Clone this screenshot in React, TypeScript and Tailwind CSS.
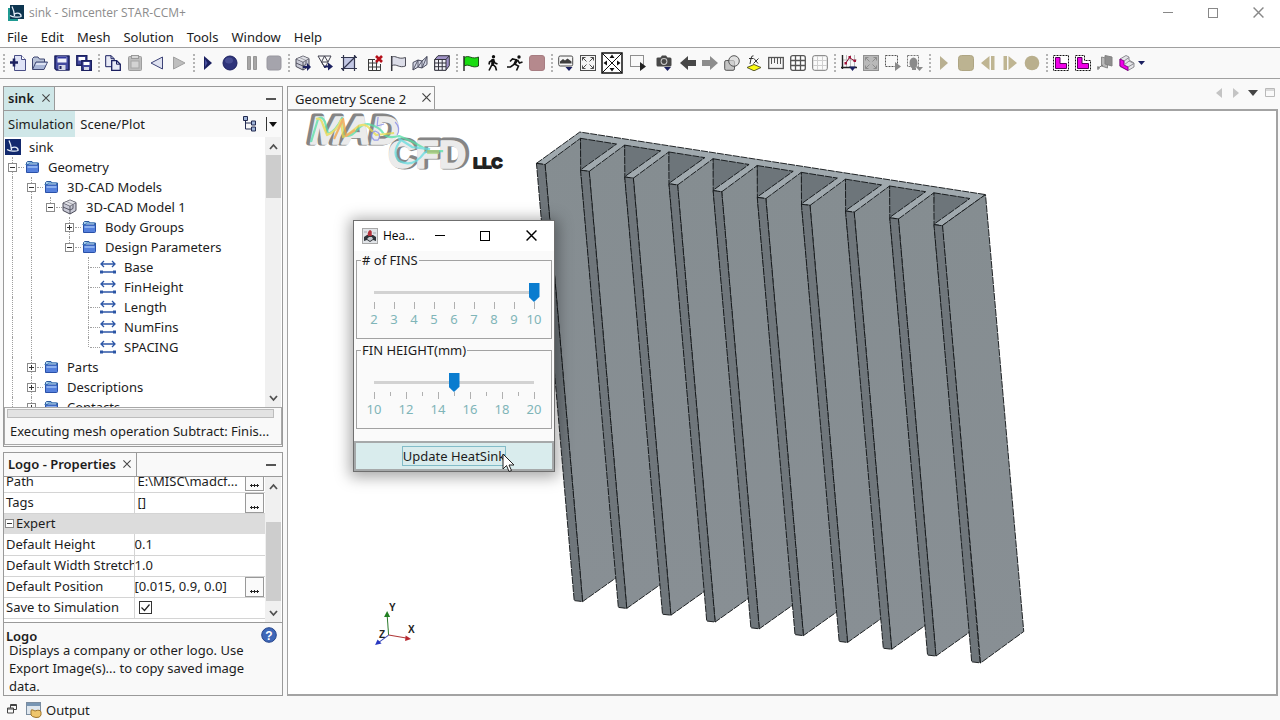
import React, { useState } from "react";

const navy = "#1b2060";

function Svg({ children, w = 16, h = 16 }: { children: React.ReactNode; w?: number; h?: number }) {
  return (
    <svg width={w} height={h} viewBox={`0 0 ${w} ${h}`} fill="none" aria-hidden="true" className="block shrink-0">
      {children}
    </svg>
  );
}

const Cube = ({ arrow = false }: { arrow?: boolean }) => (
  <Svg>
    <path d="M1 4 8 1l6 2.500v8L8 15l-7-3.500z" fill="#c9cad6" stroke="#4a4a58" />
    <path d="M1 4l7 3 6-3.500M8 7v8M4.500 2.500l6.500 3v4l-3 1.500M1 8l7 3" stroke="#4a4a58" strokeWidth=".9" />
    <path d="M1 4 8 1l6 2.500L8 7z" fill="#fff" fillOpacity=".45" />
    {arrow && <path d="M8 11h4V8l4 4-4 4v-3H8z" fill={navy} />}
  </Svg>
);

const Frame = ({ off = false }: { off?: boolean }) => (
  <Svg>
    <rect x=".5" y=".5" width="15" height="15" fill={off ? "#b9b9b9" : "#f4f4f4"} stroke={off ? "#909090" : "#4d4d4d"} />
    <path
      d="M6.500 6.500l-4-4m0 3v-3h3M9.500 6.500l4-4m-3 0h3v3M6.500 9.500l-4 4m0-3v3h3M9.500 9.500l4 4m-3 0h3v-3"
      stroke={off ? "#8c8c8c" : "#4d4d4d"}
    />
  </Svg>
);

const icons: Record<string, React.ReactNode> = {
  "New simulation": (
    <Svg>
      <path d="M4.500.5h7l4 4v11h-11z" fill="#dfe3f6" stroke="#4a4f86" />
      <path d="M11.500.5v4h4" fill="#fff" stroke="#4a4f86" />
      <path d="M0 7.500h8M4 3.500v8" stroke={navy} strokeWidth="2.600" />
    </Svg>
  ),
  Open: (
    <Svg>
      <path d="M.5 14V3.500L2 2h4l1.500 2h5v3" fill="#b9c3d8" stroke="#3f4670" />
      <path d="M.5 14.500 4 7h11.500L12 14.500z" fill="#a9b6d6" stroke="#3f4670" />
      <path d="M4.500 8h10l-1 2h-10z" fill="#dce2f2" />
    </Svg>
  ),
  Save: (
    <Svg>
      <path d="M1 1h14v14H2.500L1 13.500z" fill="#444aa0" stroke={navy} strokeWidth="1.600" strokeLinejoin="round" />
      <path d="M3.500 1.500h9v6h-9z" fill="#f1f2fb" />
      <path d="M3.500 1.500h9v2h-9z" fill="#3338a0" />
      <path d="M4.500 10h7v5h-7z" fill="#d5d7e8" />
      <path d="M5.500 11h2v3h-2z" fill={navy} />
    </Svg>
  ),
  "Save all": (
    <Svg>
      <path d="M.8.8h10v9.500H.8z" fill="#444aa0" stroke={navy} strokeWidth="1.400" />
      <path d="M2.500 2h6.500v3.500H2.500z" fill="#fff" />
      <path d="M5.800 5.800h9.500v9.500H5.800z" fill="#3e449a" stroke={navy} strokeWidth="1.400" />
      <path d="M7.500 7h6v3h-6z" fill="#fff" />
      <path d="M8 12h5v3H8z" fill="#d5d7e8" />
    </Svg>
  ),
  Copy: (
    <Svg>
      <path d="M.7.700h5.500l3 3v8H.7z" fill="#e8eaf6" stroke={navy} />
      <path d="M6 .7v3h3" stroke={navy} />
      <path d="M6.700 5.700h5l3.600 3.500v6.100H6.700z" fill="#e8eaf6" stroke={navy} strokeWidth="1.300" />
      <path d="M11.500 5.700v3.500h3.800" stroke={navy} />
    </Svg>
  ),
  Paste: (
    <Svg>
      <rect x="1.500" y="1.500" width="13" height="14" rx="1" fill="#bdbdbd" stroke="#9e9e9e" />
      <rect x="4.500" y=".5" width="7" height="3" fill="#d8d8d8" stroke="#9a9a9a" />
      <rect x="4" y="6" width="8" height="7" fill="#d3d3d3" stroke="#a6a6a6" />
    </Svg>
  ),
  Back: <Svg><path d="M13.500 2v12L2 8z" fill="#dfe2f0" stroke="#3e4478" /></Svg>,
  Forward: <Svg><path d="M2.500 2v12L14 8z" fill="#bebebe" stroke="#a0a0a0" /></Svg>,
  Play: <Svg><path d="M4 1v14l8-7z" fill={navy} /><path d="M5 4v8l2.500-4z" fill="#4a52a0" /></Svg>,
  Record: (
    <Svg>
      <circle cx="8" cy="8" r="7" fill="#2f347a" stroke={navy} />
      <ellipse cx="7" cy="5.500" rx="4" ry="3" fill="#5a60a4" opacity=".6" />
    </Svg>
  ),
  Pause: <Svg><path d="M3.500 1.500h3v13h-3zM9.500 1.500h3v13h-3z" fill="#a7a6a6" stroke="#979797" /></Svg>,
  Stop: <Svg><rect x="1" y="1" width="14" height="14" rx="2.500" fill="#a5a4ac" stroke="#98979f" /></Svg>,
  "Import part": <Cube arrow />,
  "Import surface": (
    <Svg>
      <path d="M1 1h13L8 13zM4.500 7h6M7.500 1l-3 6M7.500 1l3.500 6M4.500 7 8 13" stroke="#41414f" />
      <path d="M7 10.500h4v-3l5 4-5 4v-3H7z" fill={navy} />
    </Svg>
  ),
  "Surface mesh": (
    <Svg>
      <path d="M2.500 2.500h11v11h-11z" fill="#c2c7e4" />
      <path d="M0 2.500h16M0 13.500h16M2.500 0v16M13.500 0v16M1 15 15 1" stroke="#33364f" strokeWidth="1.200" />
    </Svg>
  ),
  "Clear mesh": (
    <Svg>
      <path d="M1.500 4v11.500h12V9M1.500 4.500H8M1.500 8h9M1.500 12h12M5.500 4v11.500M9.500 7v8.500" stroke="#3a3a3a" />
      <path d="M9 1l6 6M15 1 9 7" stroke="#b5101a" strokeWidth="2.600" />
    </Svg>
  ),
  Initialize: (
    <Svg>
      <path d="M1.700 1v15" stroke="#33333a" strokeWidth="1.500" />
      <path d="M2 2c4-2 6 3 13.500.5v8.500C9 13.500 7 8.500 2 10.500z" fill="#dcdde8" stroke="#4e4e58" />
    </Svg>
  ),
  "Volume mesh": (
    <Svg>
      <path d="M1 7.500l5-2.500 4 1 5-4.500v8L10 13l-4-1-5 3z" fill="#d5d8e6" stroke="#4a4c5e" />
      <path d="M6 5v7M10 6v7M1 15l5-10M6 12l4-6M10 13 15 1.500" stroke="#4a4c5e" strokeWidth=".9" />
    </Svg>
  ),
  "Grid cube": (
    <Svg>
      <path d="M.7 4.500 4 .7h11.300v10L12 15H.7z" fill="#a093c6" stroke="#33333d" />
      <path d="M.7 4.500H12V15.300H.7z" fill="#f3f3f8" stroke="#33333d" />
      <path d="M4.500 4.500V15M8.200 4.500V15M.7 8H12M.7 11.700H12M12 4.500 15.300.7" stroke="#33333d" />
    </Svg>
  ),
  "Green flag": (
    <Svg>
      <path d="M1 1v15" stroke="#222" strokeWidth="1.400" />
      <path d="M1.500 2.500C6-.5 9 5 15.500 2v9C9 14 6 8 1.500 11z" fill="#18dc10" stroke="#1d4f18" />
    </Svg>
  ),
  Walk: (
    <Svg>
      <circle cx="8.500" cy="1.800" r="1.700" fill="#111" />
      <path d="M8 4 7 9.500l-3 6M7.500 9l3 3 1 3.500M7.500 5 4.500 7 4 9.500M8.500 5l1.500 3 2.500 1" stroke="#111" strokeWidth="1.600" />
      <path d="M6.500 4h3L9 9.500H6.500z" fill="#111" />
    </Svg>
  ),
  Run: (
    <Svg>
      <circle cx="12" cy="2" r="1.700" fill="#111" />
      <path d="M10 4.500 7 9.500 3.500 12H0M7.500 9l4 2-2 4.500M10 5 5.500 4 3 6.500M10.500 5l2 3 3-1" stroke="#111" strokeWidth="1.600" />
      <path d="M8.500 4.500l3 .5-3 5-2-1.500z" fill="#111" />
    </Svg>
  ),
  "Stop run": <Svg><rect x=".5" y=".5" width="15" height="15" rx="2.500" fill="#b5898d" stroke="#a77d82" /></Svg>,
  "Scene list": (
    <Svg>
      <rect x=".7" y="1" width="14" height="10" rx="1.500" fill="#f5f5f5" stroke="#4a4a4a" />
      <path d="M2 8.500V6.500l3-2.500 2 1.500 2.500-2 4 3v2z" fill="#3e3e3e" />
      <path d="M7.500 12h7L11 16z" fill={navy} />
    </Svg>
  ),
  "Fit view": <Frame />,
  "Reset view": (
    <Svg w={22} h={22}>
      <rect x="1" y="1" width="20" height="20" fill="#fff" stroke="#111" strokeWidth="1.500" />
      <path d="M1 1l20 20M21 1 1 21" stroke="#111" />
      <path d="M11 2.500 8.500 6h5zM11 19.500 8.500 16h5zM2.500 11 6 8.500v5zM19.500 11 16 8.500v5z" fill="#111" />
    </Svg>
  ),
  "Select region": (
    <Svg>
      <path d="M.5.5h13v11H.5z" stroke="#222" strokeDasharray="1 1" />
      <path d="M10 7v9l6-4.500z" fill="#222" />
    </Svg>
  ),
  Camera: (
    <Svg>
      <path d="M.5 3.500Q.5 2.500 2 2.500h2.500L6 .5h4l1.500 2H14q1.500 0 1.500 1.500v6q0 1.500-1.500 1.500H2Q.5 11.500.5 10z" fill="#484848" />
      <circle cx="8" cy="6.500" r="3.400" fill="#c9c9c9" />
      <circle cx="8" cy="6.500" r="2.400" fill="#484848" />
      <path d="M8 12h7l-3.500 4z" fill={navy} />
    </Svg>
  ),
  "Previous view": <Svg><path d="M0 8l8-7v4h8v6H8v4z" fill="#484848" /></Svg>,
  "Next view": <Svg><path d="M16 8 8 1v4H0v6h8v4z" fill="#8d8d8d" /></Svg>,
  Transparency: (
    <Svg>
      <rect x=".7" y="5.500" width="9.800" height="9.800" rx="1.500" fill="#c4c4c4" stroke="#565656" />
      <circle cx="10" cy="6" r="5.300" fill="#d6d6d6" fillOpacity=".7" stroke="#565656" />
    </Svg>
  ),
  "Field function": (
    <Svg>
      <path d="M7.500.8Q5.500.3 5 3.500L4 9M3 3.500h4.500M8 3.500l4 5M12.500 3.500 7.500 8.500" stroke="#333" />
      <path d="M1 12.500 8 9.500l7 3L8 15.800z" fill="#fafa10" stroke="#5c5c2a" />
    </Svg>
  ),
  Ruler: (
    <Svg>
      <rect x=".7" y="2.500" width="14.600" height="11" fill="#f4f4f4" stroke="#555" strokeWidth="1.300" />
      <path d="M3.500 3v6M6.500 3v5M9.500 3v6M12.500 3v6" stroke="#555" />
    </Svg>
  ),
  "Show mesh": (
    <Svg>
      <rect x=".7" y=".7" width="14.600" height="14.600" rx="2" fill="#fff" stroke="#555" strokeWidth="1.300" />
      <path d="M5.500 1v14M10.500 1v14M1 5.500h14M1 10.500h14" stroke="#555" strokeWidth="1.300" />
    </Svg>
  ),
  "Hide mesh": (
    <Svg>
      <rect x=".7" y=".7" width="14.600" height="14.600" rx="2" fill="#fafafa" stroke="#777" />
      <path d="M5.500 1v14M10.500 1v14M1 5.500h14M1 10.500h14" stroke="#cfcfcf" />
    </Svg>
  ),
  "Plot list": (
    <Svg>
      <path d="M5.500 0v12M9.500 0v12M13.500 0v12M1 5h15" stroke="#bbb" />
      <path d="M1.500 0v14M0 12.500h16" stroke="#222" strokeWidth="1.400" />
      <path d="M4.500 8.500l4-6 5 3.500" stroke="#8a1030" />
      <path d="M3.500 7h2.500v2.500H3.500zM7.500 1H10v2.500H7.500zM12.500 4.500H15V7h-2.500z" fill="#a01238" />
      <path d="M8 11.500h7l-3.500 4.500z" fill={navy} />
    </Svg>
  ),
  "Fit plot": <Frame off />,
  "Zoom plot": (
    <Svg>
      <path d="M.5.5h12v11H.5z" stroke="#555" strokeDasharray="2 1" />
      <path d="M10 7v9l6-4.500z" fill="#8a8a8a" />
    </Svg>
  ),
  "Plot capture": (
    <Svg>
      <path d="M.5.5h11v11H.5z" stroke="#777" strokeDasharray="2 1" />
      <ellipse cx="6.500" cy="8" rx="4" ry="5.500" fill="#8b8b8b" />
      <path d="M5 13h4v2H5z" fill="#8b8b8b" />
      <path d="M9 12h7l-3.500 4z" fill="#8b8b8b" />
    </Svg>
  ),
  Animate: <Svg><path d="M4 1v14l8-7z" fill="#b9b091" /></Svg>,
  "Stop animation": <Svg><rect x=".5" y=".5" width="15" height="15" rx="3" fill="#bcb391" stroke="#aea583" /></Svg>,
  "Step back": <Svg><path d="M9.500 1v14L1 8zM11 1h3.500v14H11z" fill="#bfb592" /></Svg>,
  "Step forward": <Svg><path d="M6.500 1v14L15 8zM1.500 1H5v14H1.500z" fill="#bfb592" /></Svg>,
  "Record animation": <Svg><circle cx="8" cy="8" r="7.300" fill="#b9af8d" /></Svg>,
  "Select part": (
    <Svg>
      <rect x=".5" y=".5" width="15" height="15" fill="#fff" stroke="#111" strokeDasharray="2 1" />
      <path d="M2.500 2.500H7v6h6.500v5h-11z" fill="#f000e8" stroke="#54005a" />
    </Svg>
  ),
  "Select surface": (
    <Svg>
      <path d="M.5.5h9v5h6v10H.5z" fill="#fff" stroke="#111" strokeDasharray="2 1" />
      <path d="M2.500 2.500H7v6h6.500v5h-11z" fill="#f000e8" stroke="#54005a" />
    </Svg>
  ),
  "Select curve": (
    <Svg>
      <path d="M4.500 2l6 1.500V13l-6-2z" fill="#b8b8b8" stroke="#8a8a8a" />
      <path d="M8 .5l7 1.500v9L8 9z" fill="#8f8f8f" stroke="#828282" />
      <path d="M1 13l5-3M0 12h2v2H0z" stroke="#777" />
    </Svg>
  ),
  "Selection filter": (
    <Svg>
      <path d="M1 4l6-3.500 3 1.500v3l5 3v4L9 15.500l-8-4z" fill="#e4e4e8" stroke="#8d8d92" />
      <path d="M1 4l4 2v4l4 2v3.500l-8-4.500z" fill="#f000e8" stroke="#8a008a" />
      <path d="M5 6l5-3.500M5 10l5-4 5 2.500L9 12" stroke="#8d8d92" />
    </Svg>
  ),
};

const toolGroups: string[][] = [
  ["New simulation", "Open", "Save", "Save all"],
  ["Copy", "Paste", "Back", "Forward"],
  ["Play", "Record", "Pause", "Stop"],
  ["Import part", "Import surface", "Surface mesh", "Clear mesh", "Initialize", "Volume mesh", "Grid cube"],
  ["Green flag", "Walk", "Run", "Stop run"],
  ["Scene list", "Fit view", "Reset view", "Select region", "Camera", "Previous view", "Next view", "Transparency", "Field function", "Ruler", "Show mesh", "Hide mesh"],
  ["Plot list", "Fit plot", "Zoom plot", "Plot capture"],
  ["Animate", "Stop animation", "Step back", "Step forward", "Record animation"],
  ["Select part", "Select surface", "Select curve", "Selection filter"],
];
const wideTools = ["Surface mesh", "Reset view", "Select region", "Camera"];

function toolSize(name: string) {
  if (wideTools.includes(name)) return "w-[26px]";
  return name === "Clear mesh" ? "w-[25px]" : "w-[22px]";
}

const AppMark = ({ teal = false }: { teal?: boolean }) => (
  <Svg>
    {teal && <path d="M0 3h6v7l4 2v4H0z" fill="#1f9a92" />}
    <rect x={teal ? 2 : 0} y="0" width={teal ? 14 : 16} height={teal ? 14 : 16} fill={teal ? "#0d3550" : "#12296e"} />
    <path d="M4 1.500c1.500 3 2.300 6 2.500 9.500M2 10.500c3 1.800 9 2.200 11 1 .5-3-3.500-4.500-6.500-2.500" stroke="#e4edf8" strokeWidth="1.300" />
  </Svg>
);

const Folder = () => (
  <Svg>
    <path d="M2.500 12V3.500l1-1H8l1 1.500h5.500V12" fill="#a8d0ee" stroke="#2e5a9c" />
    <path d="M1.500 5.500h3l1-1.500h8v2" fill="#c6e0f4" stroke="#3f78b8" />
    <path d="M2.500 13.500V7q0-1 1-1h10q1 0 1 1v5.500q0 1-1 1z" fill="#5580dc" stroke="#2950a8" />
    <path d="M3.500 7h10v2h-10z" fill="#8db0ee" />
  </Svg>
);

const Param = () => (
  <Svg>
    <path d="M1 5h14M4 2 1 5l3 3M12 2l3 3-3 3M1 13h14" stroke="#2c56a6" strokeWidth="1.300" />
    <path d="M0 11.500h3v3H0zM13 11.500h3v3h-3z" fill="#2c56a6" />
  </Svg>
);

type Line = "none" | "full" | "top";
type Node = { label: string; icon: React.ReactNode; guides: Line[]; box?: "+" | "-"; line: Line };

const nodes: Node[] = [
  { label: "Geometry", icon: <Folder />, guides: [], box: "-", line: "full" },
  { label: "3D-CAD Models", icon: <Folder />, guides: ["full"], box: "-", line: "full" },
  { label: "3D-CAD Model 1", icon: <Cube />, guides: ["full", "full"], box: "-", line: "top" },
  { label: "Body Groups", icon: <Folder />, guides: ["full", "full", "none"], box: "+", line: "full" },
  { label: "Design Parameters", icon: <Folder />, guides: ["full", "full", "none"], box: "-", line: "top" },
  ...["Base", "FinHeight", "Length", "NumFins", "SPACING"].map((label, i) => ({
    label,
    icon: <Param />,
    guides: ["full", "full", "none", "none"] as Line[],
    line: (i === 4 ? "top" : "full") as Line,
  })),
  ...["Parts", "Descriptions", "Contacts"].map((label) => ({
    label,
    icon: <Folder />,
    guides: ["full"] as Line[],
    box: "+" as const,
    line: "full" as Line,
  })),
];

const Expander = ({ sign }: { sign: "+" | "-" }) => (
  <button aria-label={sign === "+" ? "Expand" : "Collapse"} className="block shrink-0">
    <Svg w={9} h={9}>
      <rect x=".5" y=".5" width="8" height="8" fill="#fff" stroke="#8a8a8a" />
      <path d={sign === "+" ? "M2 4.500h5M4.500 2v5" : "M2 4.500h5"} stroke="#333" />
    </Svg>
  </button>
);

function TreeRow({ node }: { node: Node }) {
  return (
    <li className="flex h-5 items-center">
      {node.guides.map((g, i) => (
        <span key={i} className="flex h-full w-[19px] shrink-0 justify-center">
          {g === "full" && <span className="w-0 border-l border-dotted border-[#a0a0a0]" />}
        </span>
      ))}
      <span className="flex h-full w-[19px] shrink-0 flex-col items-center">
        <span className="w-0 flex-1 border-l border-dotted border-[#a0a0a0]" />
        {node.box && <Expander sign={node.box} />}
        <span className={node.line === "full" ? "w-0 flex-1 border-l border-dotted border-[#a0a0a0]" : "flex-1"} />
      </span>
      <span className={node.box ? "-ml-1 w-1.5 border-t border-dotted border-[#a0a0a0]" : "-ml-2 w-2.5 border-t border-dotted border-[#a0a0a0]"} />
      {node.icon}
      <span className="ml-2 whitespace-nowrap">{node.label}</span>
    </li>
  );
}

const Chevron = ({ down = false }: { down?: boolean }) => (
  <Svg w={9} h={7}>
    <path d={down ? "M1 1l3.500 4L8 1" : "M1 6l3.500-4L8 6"} stroke="#505050" strokeWidth="1.800" />
  </Svg>
);

function ScrollBar({ top, size }: { top: string; size: string }) {
  return (
    <div className="mr-px flex w-4 shrink-0 flex-col items-center bg-[#f0f0f0]">
      <button aria-label="Scroll up" className="flex h-[18px] w-full items-center justify-center"><Chevron /></button>
      <div className={top} />
      <div className={`w-[15px] bg-[#cdcdcd] ${size}`} />
      <div className="flex-1" />
      <button aria-label="Scroll down" className="flex h-[17px] w-full items-center justify-center"><Chevron down /></button>
    </div>
  );
}

const Close = ({ s = 8, c = "#444" }: { s?: number; c?: string }) => (
  <svg width={s} height={s} viewBox="0 0 10 10" fill="none" aria-hidden="true" className="block">
    <path d="M.5.5l9 9M9.500.5l-9 9" stroke={c} strokeWidth="1.300" />
  </svg>
);

const fins = Array.from({ length: 10 }, (_, i) => i);
const poly = (i: number, pts: number[][]) =>
  pts.map(([x, y]) => `${(x + i * 44.12).toFixed(1)},${(y + i * 6.8).toFixed(1)}`).join(" ");

function Scene() {
  return (
    <svg viewBox="288 111 987 582" preserveAspectRatio="xMinYMin meet" className="block h-full w-full" role="img" aria-label="Heat sink geometry">
      <defs>
        <linearGradient id="side" x1="0" y1="0" x2="0" y2="1">
          <stop offset="0" stopColor="#858d91" />
          <stop offset="1" stopColor="#888f94" />
        </linearGradient>
      </defs>
      <g stroke="#0f1214" strokeWidth=".9" strokeDasharray="7 1" strokeLinejoin="round">
        <polygon points="536.2,163.300 579.500,132 984.800,194.500 941.500,225.600" fill="#a0a9ae" />
        {fins.slice(0, 9).map((i) => (
          <polygon key={i} points={poly(i, [[580.2, 138.3], [616.2, 144], [579.5, 170.3]])} fill="#6d757a" />
        ))}
        {fins.map((i) => (
          <g key={i}>
            <polygon
              points={i === 9 ? "941.500,225.600 984.800,194.500 1023,631 979.800,662.500" : poly(i, [[544.8, 164.5], [580.2, 138.3], [580.4, 170], [616.5, 576.8], [582.3, 601.1]])}
              fill="url(#side)"
            />
            <polygon points={poly(i, [[536.2, 163.3], [544.8, 164.5], [582.3, 601.1], [573.9, 600.1]])} fill="#6f767b" />
          </g>
        ))}
      </g>
      <g fontFamily="Liberation Sans, sans-serif" fontWeight="bold" strokeLinejoin="round">
        <g fill="#858585" stroke="#858585" strokeWidth="5">
          <text x="308" y="143" fontSize="39" fontStyle="italic">MAD</text>
          <text x="390" y="167" fontSize="38">CFD</text>
        </g>
        <g fill="#ebebeb" stroke="#ebebeb" strokeWidth="1.600">
          <text x="310" y="144" fontSize="39" fontStyle="italic">MAD</text>
          <text x="388" y="168" fontSize="38">CFD</text>
        </g>
        <text x="473" y="168" fontSize="15" fill="#222" stroke="#222" strokeWidth="1.800">LLC</text>
      </g>
      <g fill="none" strokeWidth="2.200" opacity=".75" strokeLinejoin="round">
        <path d="M311 142l7-23q4-4 7 3l3 12q8-3 14-16l3 17q5 3 12-5t14-5q8 2 12 8t16 3l14 6q10 6 16 9h14" stroke="#58e0a8" />
        <path d="M316 119q5-2 7 6l4 10q10-4 14-15l2 17q8-4 13-9t11-2l9 9 18-2" stroke="#e6dc4e" />
        <path d="M334 139l9-20 3 17 9-6" stroke="#f0a040" />
        <path d="M378 117l-1 9 7-2M395 122q6 6 2 13M374 140q-6-6 1-9q7 2 3 9z" stroke="#8086e8" strokeWidth="1.200" />
        <path d="M401 140q-10 12-2 21q14 7 25-8l6-3M398 138l14 9 18 2" stroke="#66dde0" />
        <path d="M427 152h12" stroke="#a8d880" strokeWidth="4" />
      </g>
      <g fontFamily="Liberation Sans, sans-serif" fontSize="10" fontWeight="bold" fill="#222">
        <path d="M388.500 634.500 387 614" stroke="#2c7a2c" />
        <path d="M387 610.500l3 6h-6z" fill="#228022" />
        <path d="M388.500 634.500 406 637.500" stroke="#b03838" />
        <path d="M411 638.500l-6 2 .5-5.500z" fill="#b8282f" />
        <path d="M388.500 634.500 379 641.500" stroke="#3848b8" />
        <path d="M375 644.500l2.500-5.500 4 4z" fill="#2838c0" />
        <text x="389" y="611">Y</text>
        <text x="408" y="632">X</text>
        <text x="379" y="637">Z</text>
      </g>
    </svg>
  );
}

const slider =
  "block h-[19px] w-[171px] cursor-default appearance-none bg-transparent bg-[linear-gradient(#d2d2d2,#d2d2d2)] bg-[length:160px_3px] bg-center bg-no-repeat [&::-webkit-slider-thumb]:h-[19px] [&::-webkit-slider-thumb]:w-[11px] [&::-webkit-slider-thumb]:appearance-none [&::-webkit-slider-thumb]:bg-[#0a7ccf] [&::-webkit-slider-thumb]:[clip-path:polygon(0_0,100%_0,100%_72%,50%_100%,0_72%)]";

function HeatDialog() {
  const [count, setCount] = useState(10);
  const [height, setHeight] = useState(15);
  return (
    <section role="dialog" aria-label="HeatSink" className="absolute left-[65px] top-[109px] w-[202px] border border-[#6f6f6f] bg-[#fafafa] shadow-[0_2px_14px_3px_rgba(0,0,0,0.35)]">
      <header className="flex h-[30px] items-center bg-white pb-px pl-2 font-['Open_Sans',sans-serif] text-[12px] text-black">
        <Svg>
          <rect x=".5" y=".5" width="15" height="15" fill="#e1e4e8" stroke="#a8a8a8" />
          <path d="M2 13V9l3-2 6 0 3 2v4l-3-1-3 2-3-2z" fill="#30343a" />
          <path d="M8 2c3 1 1 3 2 6H6c-1-2 0-5 2-6z" fill="#b2303a" />
          <path d="M5 11l2-2h3l1 2-3 2zM2 3h3v2H2zM11 4h3v2h-3z" fill="#c3c8ce" />
        </Svg>
        <span className="ml-[5px] flex-1">Hea...</span>
        <button aria-label="Minimize" className="flex h-full w-11 items-center justify-center"><span className="h-px w-2.5 bg-black" /></button>
        <button aria-label="Maximize" className="flex h-full w-[46px] items-center justify-center"><span className="size-2.5 border border-black" /></button>
        <button aria-label="Close" className="flex h-full w-[46px] items-center justify-center"><Close s={11} c="#000" /></button>
      </header>
      <div className="px-0.5">
        <fieldset className="flex flex-col items-center border border-[#a2a2a2] pb-2.5 pt-3.5">
          <legend className="ml-1 px-px leading-[18px]"><label htmlFor="fins"># of FINS</label></legend>
          <input id="fins" type="range" min={2} max={10} value={count} onChange={(e) => setCount(+e.target.value)} className={slider} />
          <div className="grid w-[180px] grid-cols-9 justify-items-center">
            {fins.slice(0, 9).map((n) => <span key={n} className="h-[7px] w-px bg-[#b0b0b0]" />)}
          </div>
          <div className="mt-px grid w-[180px] grid-cols-9 text-center leading-[18px] text-[#7fb5b8]">
            {fins.slice(0, 9).map((n) => <span key={n}>{n + 2}</span>)}
          </div>
        </fieldset>
        <fieldset className="mt-0.5 flex flex-col items-center border border-[#a2a2a2] pb-2.5 pt-3.5">
          <legend className="ml-1 px-px leading-[18px]"><label htmlFor="height">FIN HEIGHT(mm)</label></legend>
          <input id="height" type="range" min={10} max={20} value={height} onChange={(e) => setHeight(+e.target.value)} className={slider} />
          <div className="grid w-44 grid-cols-11 justify-items-center">
            {Array.from({ length: 11 }, (_, n) => (
              <span key={n} className={n % 2 ? "h-1 w-px bg-[#b0b0b0]" : "h-[7px] w-px bg-[#b0b0b0]"} />
            ))}
          </div>
          <div className="mt-px grid w-48 grid-cols-6 text-center leading-[18px] text-[#7fb5b8]">
            {[10, 12, 14, 16, 18, 20].map((n) => <span key={n}>{n}</span>)}
          </div>
        </fieldset>
      </div>
      <button className="mt-3 flex h-[30px] w-full items-center justify-center border-2 border-[#a6a9aa] bg-[#d9eced]">
        <span className="border border-[#82bcc8] leading-[18px]">Update HeatSink</span>
      </button>
      <svg width="13" height="20" viewBox="0 0 13 20" aria-hidden="true" className="absolute left-[148px] top-[232px]">
        <path d="M1 1v15l3.500-3.500L7 18.500l2.500-1L7 12h5z" fill="#fff" stroke="#222" />
      </svg>
    </section>
  );
}

const properties = [
  { name: "Path", value: "E:\\MISC\\madcf...", more: true, pad: true },
  { name: "Tags", value: "[]", more: true, pad: true },
  { name: "Expert" },
  { name: "Default Height", value: "0.1" },
  { name: "Default Width Stretch", value: "1.0" },
  { name: "Default Position", value: "[0.015, 0.9, 0.0]", more: true },
  { name: "Save to Simulation", check: true },
];

function Properties() {
  return (
    <section className="mt-[5px] flex flex-1 flex-col border border-[#9a9a9a]">
      <header className="flex h-6 shrink-0 items-center border-b border-[#9a9a9a]">
        <div className="flex h-full items-center gap-[7px] border-r border-[#9a9a9a] pb-px pl-1 pr-[5px] font-semibold">
          Logo - Properties
          <button aria-label="Close properties"><Close /></button>
        </div>
        <span className="flex-1" />
        <button aria-label="Minimize properties" className="px-1.5 py-2"><span className="block h-0.5 w-2.5 bg-[#555]" /></button>
      </header>
      <div className="flex h-[145px] overflow-hidden bg-white">
        <table className="-mt-1.5 w-0 flex-1 table-fixed border-collapse self-start leading-[19px]">
          <colgroup>
            <col className="w-[130px]" />
            <col />
            <col className="w-5" />
          </colgroup>
          <tbody>
            {properties.map((p) =>
              p.name === "Expert" ? (
                <tr key={p.name} className="h-[21px] bg-[#dcdcdc]">
                  <th colSpan={3} className="p-0 text-left font-normal">
                    <span className="flex items-center gap-0.5 pl-px"><Expander sign="-" />Expert</span>
                  </th>
                </tr>
              ) : (
                <tr key={p.name} className="h-[21px] border-b border-[#d4d4d4]">
                  <th scope="row" id={p.name} className="overflow-hidden whitespace-nowrap border-r border-[#d4d4d4] p-0 pl-0.5 text-left font-normal">{p.name}</th>
                  <td colSpan={p.more ? 1 : 2} className={p.pad ? "whitespace-nowrap p-0 pl-[3px]" : "whitespace-nowrap p-0"}>
                    {p.check ? (
                      <span className="flex pl-1">
                        <input
                          type="checkbox"
                          defaultChecked
                          aria-labelledby={p.name}
                          className="peer size-[13px] appearance-none border border-[#333] bg-white"
                        />
                        <svg width="13" height="13" viewBox="0 0 13 13" fill="none" aria-hidden="true" className="pointer-events-none -ml-[13px] hidden peer-checked:block">
                          <path d="M2.500 6.500l3 3 5-6" stroke="#222" strokeWidth="1.200" />
                        </svg>
                      </span>
                    ) : p.value}
                  </td>
                  {p.more && (
                    <td className="p-0">
                      <button aria-label={`Edit ${p.name}`} className="flex h-5 w-[19px] items-end justify-center border border-[#999] bg-[#fafafa] pb-[3px]">
                        <Svg w={9} h={3}><path d="M0 1.500h9M1.500 0v3M4.500 0v3M7.500 0v3" stroke="#222" /></Svg>
                      </button>
                    </td>
                  )}
                </tr>
              )
            )}
          </tbody>
        </table>
        <ScrollBar top="h-[27px]" size="h-[79px]" />
      </div>
      <div className="flex flex-1 border-t border-[#9a9a9a] pl-0.5 pt-2">
        <div className="flex-1">
          <h2 className="font-semibold leading-[10px]">Logo</h2>
          <p className="pl-[3px] leading-[18px]">Displays a company or other logo. Use Export Image(s)... to copy saved image data.</p>
        </div>
        <button aria-label="Help" className="-mt-1 mr-[5px] self-start">
          <Svg>
            <circle cx="8" cy="8" r="7.300" fill="#3f68b8" stroke="#26458c" />
            <text x="8" y="12.500" fontSize="12" fontWeight="bold" fill="#fff" textAnchor="middle" fontFamily="Liberation Sans, sans-serif">?</text>
          </Svg>
        </button>
      </div>
    </section>
  );
}

export default function App() {
  return (
    <div className="flex min-h-screen flex-col bg-[#f9f9f9] font-['Noto_Sans',sans-serif] text-[13px] leading-[18px] text-[#1c1c1c]">
      <header className="flex h-[26px] items-center bg-white pb-px pl-2 font-['Open_Sans',sans-serif] text-[12px] text-[#8c8c8c]">
        <AppMark teal />
        <h1 className="ml-[5px] flex-1 pt-px">sink - Simcenter STAR-CCM+</h1>
        <button aria-label="Minimize window" className="flex h-full w-11 items-center justify-center"><span className="h-px w-2.5 bg-[#888]" /></button>
        <button aria-label="Maximize window" className="flex h-full w-[46px] items-center justify-center"><span className="size-2.5 border border-[#888]" /></button>
        <button aria-label="Close window" className="flex h-full w-11 items-center justify-center"><Close s={11} c="#888" /></button>
      </header>
      <nav className="flex h-[21px] items-center gap-[13px] bg-white pl-[7px]">
        {["File", "Edit", "Mesh", "Solution", "Tools", "Window", "Help"].map((m) => <button key={m}>{m}</button>)}
      </nav>
      <div role="toolbar" className="flex h-8 items-center border-y border-[#a0a0a0]">
        {toolGroups.map((group, g) => (
          <React.Fragment key={g}>
            <span className="flex w-[7px] shrink-0 justify-center"><span className="h-[18px] border-l-2 border-dotted border-[#b4b4b4]" /></span>
            {group.map((name) => (
              <button key={name} aria-label={name} className={`flex h-6 shrink-0 items-center justify-center ${toolSize(name)}`}>
                {icons[name]}
              </button>
            ))}
          </React.Fragment>
        ))}
        <button aria-label="Filter options"><Svg w={7} h={4}><path d="M0 0h7L3.500 4z" fill={navy} /></Svg></button>
      </div>
      <main className="flex flex-1 pl-[3px] pr-0.5 pt-[7px]">
        <div className="flex w-[280px] shrink-0 flex-col">
          <section className="flex h-[361px] flex-col border border-[#9a9a9a]">
            <header className="flex h-6 shrink-0 items-center border-b border-[#9a9a9a]">
              <div className="flex h-full items-center gap-2 border-r border-[#9a9a9a] bg-[#cfe7e8] pb-0.5 pl-1 pr-1 font-semibold">
                sink
                <button aria-label="Close sink"><Close /></button>
              </div>
              <span className="flex-1" />
              <button aria-label="Minimize tree" className="px-1.5 py-2"><span className="block h-0.5 w-2.5 bg-[#555]" /></button>
            </header>
            <div className="flex h-[26px] shrink-0 items-center">
              <button className="h-full bg-[#cfe7e8] pl-1 pr-0.5">Simulation</button>
              <button className="pl-[5px]">Scene/Plot</button>
              <span className="flex-1" />
              <button aria-label="Tree view" className="mr-2.5">
                <Svg w={13}>
                  <path d="M2.500 3v10h7M2.500 7h7" stroke="#222a50" />
                  <path d="M.5.5h4v4h-4zM8.500 5h4v4h-4zM8.500 11h4v4h-4z" fill="#9fb4d8" stroke="#222a50" />
                </Svg>
              </button>
              <button aria-label="View options" className="mr-[5px] flex h-3.5 items-center border-l border-[#333] pl-0.5">
                <Svg w={8} h={5}><path d="M0 0h8L4 5z" fill="#111" /></Svg>
              </button>
            </div>
            <div className="flex h-[270px] overflow-hidden bg-white">
              <ul className="-ml-px flex-1">
                <li className="flex h-5 items-center pl-0.5"><AppMark /><span className="ml-2">sink</span></li>
                {nodes.map((n) => <TreeRow key={n.label} node={n} />)}
              </ul>
              <ScrollBar top="h-0" size="h-[43px]" />
            </div>
            <div className="mb-px flex flex-1 flex-col border border-[#a8a8a8] px-0.5 pt-px">
              <div role="progressbar" aria-label="Mesh operation" className="mr-[5px] h-[9px] shrink-0 border border-[#bdbdbd] bg-[#e3e3e3]" />
              <p className="flex flex-1 items-center whitespace-nowrap pl-[3px]">Executing mesh operation Subtract: Finis...</p>
            </div>
          </section>
          <Properties />
        </div>
        <div className="ml-1 flex min-w-0 flex-1 flex-col">
          <div className="flex h-[23px] items-end">
            <div className="flex h-full items-center border-x border-t border-[#9a9a9a] pl-[7px] pr-[3px] pt-0.5">
              Geometry Scene 2
              <button aria-label="Close scene" className="-mt-1 ml-4"><Close s={9} /></button>
            </div>
            <span className="flex-1" />
            <div className="grid h-full grid-cols-[17px_17px_17px_17px] items-start justify-items-center pt-0.5">
              <button aria-label="Previous tab"><Svg w={6} h={10}><path d="M6 0v10L0 5z" fill="#c4c4c4" /></Svg></button>
              <button aria-label="Next tab"><Svg w={6} h={10}><path d="M0 0v10l6-5z" fill="#c4c4c4" /></Svg></button>
              <button aria-label="Tab list" className="pt-0.5"><Svg w={10} h={6}><path d="M0 0h10L5 6z" fill="#444" /></Svg></button>
              <button aria-label="Maximize panel"><Svg w={10} h={9}><path d="M.5.5h9v8h-9zM.5 2h9" stroke="#b8b8b8" /></Svg></button>
            </div>
          </div>
          <div className="relative h-0 flex-1 border-2 border-l border-[#a3a3a3] bg-white">
            <Scene />
            <HeatDialog />
          </div>
        </div>
      </main>
      <footer className="flex h-6 items-center pl-[7px] pt-px">
        <button aria-label="Restore panels">
          <Svg w={10} h={10}><path d="M3.500 4V.5h6v5H7M.5 4h6v5h-6zM.5 5h6M3.500 1.500h6" stroke="#444" /></Svg>
        </button>
        <button className="ml-[9px] flex items-center gap-1 pt-0.5">
          <Svg>
            <rect x=".5" y=".5" width="14" height="12" fill="#dfe7ee" stroke="#7b8da0" />
            <path d="M1 1h13v3H1z" fill="#7896b4" />
            <path d="M5 9q0-2 2-1l2 1q5-2 6 1v3q-1 3-5 2.500T5 13z" fill="#efc66c" stroke="#a0762c" />
          </Svg>
          Output
        </button>
      </footer>
    </div>
  );
}
